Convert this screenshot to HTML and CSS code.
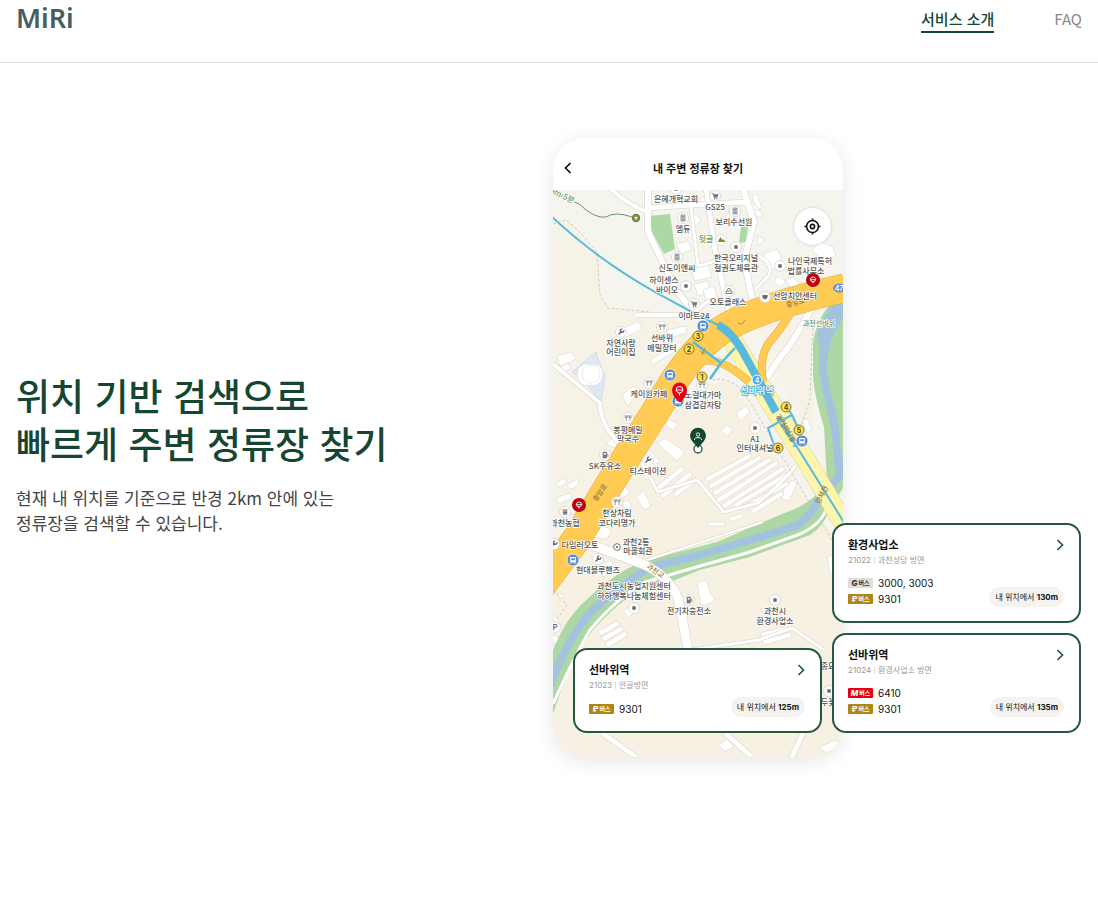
FILE: index.html
```html
<!DOCTYPE html>
<html lang="ko">

<head>
    <meta charset="UTF-8">
    <meta name="viewport" content="width=device-width, initial-scale=1.0">
    <title>MiRi</title>
    <link rel="stylesheet" href="styles.css">
</head>

<body>
    <header class="header">
        <a class="logo" href="#">MiRi</a>
        <nav class="nav">
            <a class="nav-link active" href="#intro">서비스 소개</a>
            <a class="nav-link" href="#faq">FAQ</a>
        </nav>
    </header>

    <main class="feature" id="intro">
        <div class="feature-text">
            <h1>위치 기반 검색으로<br>빠르게 주변 정류장 찾기</h1>
            <p>현재 내 위치를 기준으로 반경 2km 안에 있는<br>정류장을 검색할 수 있습니다.</p>
        </div>

        <div class="showcase">
            <div class="phone">
                <div class="phone-header">
                    <button class="back" aria-label="뒤로">
                        <svg width="8" height="12" viewBox="0 0 8 12"><path d="M6.5 1 L1.5 6 L6.5 11" /></svg>
                    </button>
                    <h2>내 주변 정류장 찾기</h2>
                </div>
                <div class="map">
                    <svg class="map-svg" viewBox="553 190 290 567">
                        <defs>
                            <g id="poi"><circle r="5.5" fill="#fff" stroke="#d3d0c8" stroke-width="0.7" /></g>
                            <g id="square"><use href="#poi" /><rect x="-1.7" y="-1.7" width="3.4" height="3.4" fill="#666" /></g>
                            <g id="food"><use href="#poi" /><path d="M-2.8 -2.8 V-0.5 H-0.6 V-2.8 M-1.7 -2.8 V3 M0.9 -2.8 V-0.5 H3.1 V-2.8 M2 -2.8 V3" fill="none" stroke="#777" stroke-width="0.7" /></g>
                            <g id="building"><use href="#poi" /><path d="M-2 -3 h4 v6 h-4 z M-1 -1.5 h2 M-1 0 h2 M-1 1.5 h2" fill="#ddd" stroke="#777" stroke-width="0.8" /></g>
                            <g id="cart"><use href="#poi" /><path d="M-3.3 -2.5 h1.4 l1 3.8 h3 l1 -2.9 h-4.4" fill="#777" stroke="#777" stroke-width="0.8" /><circle cx="-0.5" cy="2.8" r="0.7" fill="#777" /><circle cx="1.8" cy="2.8" r="0.7" fill="#777" /></g>
                            <g id="fuel"><use href="#poi" /><path d="M-2 3 v-6 h3.5 v6 z M2 -1.5 l1 1 v2.5" fill="#777" stroke="#777" stroke-width="0.7" /><path d="M-1.2 -2 h2 v1.6 h-2 z" fill="#fff" /></g>
                            <g id="car"><use href="#poi" /><path d="M-2 -0.5 l1 -2 h2 l1 2 M-3 0 h6 v2.5 h-6 z" fill="none" stroke="#777" stroke-width="0.9" /></g>
                            <g id="wrench"><use href="#poi" /><path d="M-2.5 2.5 L1 -1" stroke="#666" stroke-width="1.4" /><path d="M2.8 -1.8 a1.8 1.8 0 1 1 -1.6 -1.3" fill="none" stroke="#666" stroke-width="1.2" /></g>
                            <g id="bus"><circle r="6" fill="#5b8fd6" stroke="#fff" stroke-width="0.7" /><path d="M-2.8 -3 h5.6 v5.4 h-5.6 z" fill="#fff" /><path d="M-1.8 -1.8 h3.6 v2 h-3.6 z" fill="#5b8fd6" /><path d="M-2 2.5 v1 M2 2.5 v1" stroke="#fff" /></g>
                            <g id="stop"><circle r="7" fill="#b90010" /><path d="M-2.7 -0.3 a2.7 2.7 0 0 1 5.4 0 z M-2.7 -0.3 q0.5 2.2 2.7 2.2 t2.7 -2.2 M0 1.5 V3.5" fill="none" stroke="#fff" stroke-width="0.9" /></g>
                            <g id="exit"><circle r="5" fill="#fbe04a" stroke="#5d5935" stroke-width="0.8" /></g>
                        </defs>

                        <rect x="553" y="190" width="290" height="567" fill="#f5f4ed" />
                        <path d="M553 230 L562 221 L575 229 L598 258 L600 296 L608 308 L650 314 L690 324 L697 345 L640 430 L600 492 L553 560 Z" fill="#f7f2e6" />
                        <path d="M700 385 L728 382 L745 392 L800 487 L843 550 V757 H553 V590 L620 490 L670 410 Z" fill="#f7f1e4" />
                        <path d="M735 385 L790 480 L843 535 V430 L795 455 Z" fill="#f4f3ee" />
                        <path d="M755 320 L810 300 L814 425 L800 420 Z" fill="#f7f2e8" />

                        <!-- parks and pond -->
                        <path d="M649 216 L670 214 L675 249 L664 254 L652 232 Z" fill="#acd8a4" />
                        <path d="M741 227 L748 226 L746 242 L739 243 Z" fill="#acd8a4" />
                        <path d="M596 352 L605 377 L601 402 L587 385 L572 372 Z" fill="#dce8f4" stroke="#cbd8e4" stroke-width="0.7" />
                        <path d="M577 375 q0 -12 13 -11 q14 -1 13 11 q-3 13 -13 10 q-11 3 -13 -10" fill="#fff" stroke="#cfd8e0" stroke-width="0.6" />
                        <circle cx="591" cy="374" r="9" fill="#fff" stroke="#d9e2ea" stroke-width="0.7" />

                        <!-- blocks of buildings -->
                        <g fill="#fff" stroke="#dedbd2" stroke-width="0.7">
                            <path d="M688 219 l9 -5 4 8 -9 5z M683 300 l8 -2 3 5 -9 3z M676 244 l12 -3 4 9 -11 4z M700 197 l8 0 v8 h-8z" />
                            <path d="M691 268 l17 -4 4 13 -18 4z M694 284 l14 -3 3 11 -13 4z M728 203 l10 -1 2 14 -10 2z M725 215 l8 -2 4 9 -9 3z" />
                            <path d="M752 196 l5 -2 5 14 -6 3z M757 236 l8 3 -7 7z M763 254 l14 -5 5 9 -9 12 -8 -4z M750 206 l5 -3 8 13 -5 2z" />
                            <path d="M777 276 l9 5 -5 6 -7 -5z M785 279 l9 -2 6 8 -9 3z M812 250 l8 -8 12 4 4 10 -12 6z M703 290 l11 -4 4 14 -11 3z" />
                            <path d="M557 356 l14 -4 5 7 -16 8z M560 366 l8 -3 3 6 -7 3z M622 329 l17 -8 3 8 -18 9z M612 338 l9 -3 3 7 -10 4z" />
                            <path d="M650 360 l30 -18 3 5 -31 18z M667 330 l18 -4 2 7 -18 5z M622 395 l11 -9 5 5 -10 16z M736 413 l10 -7 4 6 -10 9z" />
                            <path d="M668 419 l10 5 -5 6 -7 -4z M657 443 l8 -5 20 14 -8 9z M726 425 l7 4 -5 7 -7 -5z M648 449 l12 12 -7 5 -9 -11z" />
                            <path d="M606 444 l8 -7 5 4 -4 7z M603 455 l13 -4 4 9 -10 10 -9 -5z M640 462 l10 -7 7 18 -11 7z M617 491 l8 -5 5 7 -9 6z" />
                            <path d="M556 498 l14 -5 2 5 -14 6z M567 485 l10 -6 2 5 -8 6z M556 483 l8 -5 3 5 -9 4z M568 508 l9 -5 3 7 -8 4z" />
                            <path d="M592 532 l8 -7 12 5 -5 9 -14 -2z M622 503 l6 -3 4 8 -6 3z M636 496 l8 -5 7 15 -7 4z M697 583 l9 -3 5 15 4 3 -1 4 -13 4z" />
                            <path d="M599 565 l12 -5 5 11 -13 6z M623 611 l14 -9 4 6 -13 9z M708 522 h17 v4 h-17z M728 518 l14 -5 2 4 -14 5z M558 592 l6 4 -4 6z" />
                            <path d="M784 488 l8 -8 5 3 -8 18 -7 -2z M807 418 l5 12 -5 3 -5 -12z M827 557 l8 -3 v18 l-5 2z M718 745 l10 -6 6 8 -9 4z" />
                            <path d="M553 615 l6 5 -5 6z M551 634 l11 5 -6 10z M819 747 l17 -7 5 6 -15 7z" />
                        </g>

                        <!-- greenhouses -->
                        <g fill="#fff" stroke="#dcd9d0" stroke-width="0.7">
                            <path d="M660 495 l30 -24 3 4 -30 24z M653 489 l29 -23 3 4 -29 23z M673 493 l22 -16 3 4 -22 16z" />
                            <path d="M705 478 l45 -25 2 4 -45 25z M708 485 l52 -30 2 4 -51 30z M712 492 l58 -35 2 4 -57 35z M716 499 l61 -39 2 4 -60 39z" />
                            <path d="M721 505 l62 -39 2 4 -61 39z M733 504 l54 -32 2 4 -53 32z M741 507 l46 -26 2 4 -45 26z M750 510 l32 -19 2 4 -31 19z" />
                            <path d="M598 631 l19 -10 3 4 -19 11z M601 637 l20 -11 3 4 -20 12z M605 643 l20 -12 3 4 -20 13z" />
                            <path d="M760 633 l27 -7 2 5 -27 8z M762 640 l28 -8 2 5 -28 8z" />
                        </g>

                        <!-- side roads -->
                        <g fill="none" stroke-linejoin="round">
                            <g stroke="#d3d0c8">
                                <path d="M610 188 Q625 203 647 212" stroke-width="5" />
                                <path d="M648 188 V232 L676 290 L696 315" stroke-width="7" />
                                <path d="M706 188 L715 250 L730 318 L735 328" stroke-width="6" />
                                <path d="M743 188 L754 222 L744 260 L752 298" stroke-width="7" />
                                <path d="M647 208 L706 204 L749 202" stroke-width="6" />
                                <path d="M691 207 L698 266 L731 257 M755 254 Q774 262 769 275 L755 290" stroke-width="4" />
                                <path d="M636 315 L690 315 L710 300" stroke-width="5" />
                                <path d="M553 364 L600 403 Q600 425 621 445" stroke-width="5" />
                                <path d="M646 470 L658 492 L697 480 L724 512 L758 503 Q785 480 796 465" stroke-width="4" />
                                <path d="M725 733 L752 757 M792 757 L803 733 M602 733 L636 757" stroke-width="6" />
                            </g>
                            <g stroke="#fff">
                                <path d="M610 188 Q625 203 647 212" stroke-width="4" />
                                <path d="M648 188 V232 L676 290 L696 315" stroke-width="6" />
                                <path d="M706 188 L715 250 L730 318 L735 328" stroke-width="5" />
                                <path d="M743 188 L754 222 L744 260 L752 298" stroke-width="6" />
                                <path d="M647 208 L706 204 L749 202" stroke-width="5" />
                                <path d="M691 207 L698 266 L731 257 M755 254 Q774 262 769 275 L755 290" stroke-width="3" />
                                <path d="M636 315 L690 315 L710 300" stroke-width="4" />
                                <path d="M553 364 L600 403 Q600 425 621 445" stroke-width="4" />
                                <path d="M646 470 L658 492 L697 480 L724 512 L758 503 Q785 480 796 465" stroke-width="3" />
                                <path d="M725 733 L752 757 M792 757 L803 733 M602 733 L636 757" stroke-width="5" />
                            </g>
                        </g>

                        <!-- stream -->
                        <path d="M843 296 L833 301 Q815 320 813 345 V375 Q814 395 824 427 L827 482 Q814 500 797 508 L763 522 L717 542 L647 560 Q617 570 583 603 Q565 620 553 650 V714 Q570 660 593 630 Q617 603 643 587 L670 582 L700 570 L750 557 L810 535 Q825 525 829 510 L843 488 Z" fill="#add8a5" />
                        <path d="M843 301 L833 304 Q819 324 817 335 Q821 350 819 370 Q822 390 828 414 Q832 430 833 447 L836 482 L843 470 V462 L840 445 Q840 425 834 405 Q828 385 827 367 Q828 345 835 332 L843 318 Z" fill="#a3c2de" />
                        <path d="M550 685 Q571 632 592 611 Q617 588 648 568 L700 555 L750 540 L798 525 Q813 513 817 502 L843 472" fill="none" stroke="#a3c2de" stroke-width="8" />
                        <path d="M553 704 Q575 655 590 630 Q617 598 645 582 L700 566 L750 552 L800 534 Q820 525 826 510" fill="none" stroke="#fff" stroke-width="3" />
                        <path d="M644 561 L763 522" stroke="#d3d0c8" stroke-width="3" />
                        <path d="M644 561 L763 522" stroke="#fff" stroke-width="2" />
                        <path d="M592 545 L645 565 Q668 576 678 598 Q682 615 688 650" fill="none" stroke="#d3d0c8" stroke-width="10" />
                        <path d="M592 545 L645 565 Q668 576 678 598 Q682 615 688 650" fill="none" stroke="#fff" stroke-width="9" />
                        <path d="M690 650 L759 640 L792 628 L824 650" fill="none" stroke="#d3d0c8" stroke-width="4" />
                        <path d="M690 650 L759 640 L792 628 L824 650" fill="none" stroke="#fff" stroke-width="3" />

                        <!-- dashed borders -->
                        <g fill="none" stroke="#c4c0b6" stroke-width="0.8" stroke-dasharray="3 2">
                            <path d="M553 224 L566 220 L580 232 L597 252 L600 295 L608 308 L650 312" />
                            <path d="M712 380 Q728 376 744 392 L790 470 L832 540" />
                            <path d="M814 318 L812 345 L810 400 L800 430" />
                            <path d="M680 350 L650 405 L625 445" />
                            <path d="M553 590 L567 605 L555 622" />
                        </g>

                        <!-- main roads -->
                        <path d="M816 302 L790 345 Q773 366 766 380" fill="none" stroke="#d3d0c8" stroke-width="7" />
                        <path d="M816 302 L790 345 Q773 366 766 380" fill="none" stroke="#fff" stroke-width="6" />
                        <path d="M726 330 L818 480 L850 534" fill="none" stroke="#ddd39b" stroke-width="20" />
                        <path d="M726 330 L818 480 L850 534" fill="none" stroke="#fdf5ac" stroke-width="19" />
                        <path d="M794 306 Q784 326 768 344 Q759 359 763 382" fill="none" stroke="#dfae46" stroke-width="8" />
                        <path d="M694 364 Q716 352 749 382" fill="none" stroke="#dfae46" stroke-width="8" />
                        <path d="M540 588 L578 537 L614 477 L664 398 Q690 352 720 331 Q755 308 845 288" fill="none" stroke="#dfae46" stroke-width="29" />
                        <path d="M540 588 L578 537 L614 477 L664 398 Q690 352 720 331 Q755 308 845 288" fill="none" stroke="#ffcb53" stroke-width="28" />
                        <path d="M794 306 Q784 326 768 344 Q759 359 763 382 M694 364 Q716 352 749 382" fill="none" stroke="#ffcb53" stroke-width="7" />

                        <!-- subway lines and exits -->
                        <g fill="none" stroke="#58b9df">
                            <path d="M551 216 Q598 260 655 292 L690 311 L720 326" stroke-width="2" />
                            <path d="M718 325 Q731 331 743 352 L776 412" stroke-width="8" />
                            <path d="M784 427 L797 447 L850 532" stroke-width="2" />
                            <path d="M693 342 L721 363 L735 348 M721 363 L710 379" stroke-width="2.5" />
                            <path d="M786 406 L792 415 L768 428 L774 445 M792 415 L800 432" stroke-width="2" />
                            <path d="M778 417 L796 446" stroke-width="5" stroke-dasharray="4 4" />
                        </g>
                        <path d="M553 193 Q568 199 579 204 Q595 219 606 217 Q615 211 632 217" fill="none" stroke="#6b9468" stroke-width="1" />
                        <circle cx="636" cy="218" r="3.7" fill="#8f954b" stroke="#6d7135" />
                        <path d="M634.5 217 h3 l-1.5 3z" fill="#fff" />

                        <!-- places -->
                        <use href="#square" x="676" y="189" />
                        <use href="#cart" x="715" y="196" />
                        <use href="#building" x="735" y="211" />
                        <use href="#building" x="683" y="218" />
                        <use href="#poi" x="721" y="240" />
                        <path d="M717.5 242 l3 -5 2 3 1 -1 2 3z" fill="#71973a" />
                        <use href="#square" x="736" y="247" />
                        <use href="#building" x="677" y="257" />
                        <use href="#square" x="686" y="286" />
                        <use href="#square" x="780" y="266" />
                        <use href="#car" x="729" y="291" />
                        <use href="#cart" x="694" y="304" />
                        <use href="#poi" x="765" y="297" />
                        <path d="M762 295 q3 1 3 -1 q0 2 3 1 q-0.5 4 -3 4.5 q-2.5 -0.500 -3 -4.500" fill="#666" />
                        <use href="#food" x="662" y="327" />
                        <use href="#wrench" x="621" y="332" />
                        <use href="#food" x="649" y="383" />
                        <use href="#food" x="702" y="385" />
                        <use href="#food" x="628" y="418" />
                        <use href="#square" x="755" y="428" />
                        <use href="#fuel" x="605" y="455" />
                        <use href="#wrench" x="648" y="460" />
                        <use href="#food" x="617" y="502" />
                        <use href="#poi" x="565" y="512" />
                        <text class="place" x="565" y="515">₩</text>
                        <use href="#wrench" x="554" y="544" />
                        <circle cx="617" cy="547" r="3.3" fill="#fff" stroke="#777" />
                        <circle cx="617" cy="547" r="1" fill="#555" />
                        <use href="#wrench" x="598" y="559" />
                        <use href="#square" x="634" y="608" />
                        <use href="#fuel" x="689" y="600" />
                        <use href="#square" x="775" y="600" />
                        <use href="#poi" x="555" y="627" />
                        <text class="place" x="555" y="630">P</text>
                        <use href="#square" x="829" y="691" />

                        <g class="place">
                            <text x="676" y="202">은혜개혁교회</text>
                            <text x="715" y="210">GS25</text>
                            <text x="734" y="225">보리수선원</text>
                            <text x="683" y="232">엠듀</text>
                            <text x="706" y="242" class="green">뒷골</text>
                            <text x="736" y="261">한국오리지널</text>
                            <text x="736" y="271">절권도체육관</text>
                            <text x="677" y="271">신도이앤씨</text>
                            <text x="664" y="283">하이센스</text>
                            <text x="667" y="293">바이오</text>
                            <text x="810" y="264">나인국제특허</text>
                            <text x="806" y="274">법률사무소</text>
                            <text class="road" transform="translate(796 305) rotate(-15)">중앙로</text>
                            <text x="795" y="299">선암치안센터</text>
                            <text x="728" y="305">오토클래스</text>
                            <text x="694" y="319">이마트24</text>
                            <text x="662" y="341">선바위</text>
                            <text x="662" y="351">메밀장터</text>
                            <text x="621" y="346">자연사랑</text>
                            <text x="621" y="355">어린이집</text>
                            <text x="649" y="397">케이원카페</text>
                            <text x="703" y="398">노걸대가마</text>
                            <text x="703" y="408">삼겹감자탕</text>
                            <text x="628" y="433">봉평메밀</text>
                            <text x="628" y="442">막국수</text>
                            <text x="755" y="442">A1</text>
                            <text x="755" y="451">인터내셔널</text>
                            <text x="605" y="469">SK주유소</text>
                            <text x="648" y="474">티스테이션</text>
                            <text x="617" y="516">한상차림</text>
                            <text x="617" y="526">코다리명가</text>
                            <text x="565" y="526">과천농협</text>
                            <text x="580" y="548">다임러오토</text>
                            <text x="636" y="545">과천2통</text>
                            <text x="638" y="554">마을회관</text>
                            <text x="598" y="573">현대블루핸즈</text>
                            <text x="634" y="589">과천도시농업지원센터</text>
                            <text x="634" y="599">하하행복나눔체험센터</text>
                            <text x="689" y="614">전기차충전소</text>
                            <text x="775" y="614">과천시</text>
                            <text x="775" y="624">환경사업소</text>
                            <text x="828" y="669">종묘</text>
                            <text x="828" y="705">두꽃</text>
                            <text x="819" y="326" class="stream">과천선바위</text>
                            <text class="road" transform="translate(602 494) rotate(-55)">중앙로</text>
                            <text class="road" transform="translate(824 496) rotate(-62)">양재천</text>
                            <text class="road" transform="translate(654 573) rotate(35)">과천교</text>
                            <text class="road" transform="translate(784 430) rotate(58)">과천봉담로</text>
                            <text class="green" transform="translate(561 198) rotate(25)">9m·5분</text>
                            <text x="757" y="394" class="station">선바위역</text>
                        </g>
                        <path d="M738 323 q4 3 7 -3 M700 351 l5 3 M702 355 l3 -7" fill="none" stroke="#a47d34" stroke-width="0.8" />

                        <circle cx="757" cy="380" r="5" fill="#46aedb" stroke="#fff" />
                        <text class="exit white" x="757" y="383">4</text>
                        <use href="#bus" x="703" y="326" />
                        <use href="#bus" x="670" y="375" />
                        <use href="#bus" x="678" y="401" />
                        <use href="#bus" x="802" y="441" />
                        <use href="#bus" x="573" y="560" />
                        <use href="#exit" x="698" y="336" /><text class="exit" x="698" y="339">3</text>
                        <use href="#exit" x="689" y="349" /><text class="exit" x="689" y="352">2</text>
                        <use href="#exit" x="702" y="377" /><text class="exit" x="702" y="380">1</text>
                        <use href="#exit" x="786" y="407" /><text class="exit" x="786" y="410">4</text>
                        <use href="#exit" x="799" y="430" /><text class="exit" x="799" y="433">5</text>
                        <use href="#exit" x="778" y="448" /><text class="exit" x="778" y="451">6</text>
                        <ellipse cx="840" cy="288" rx="7" ry="4.5" fill="#5b8fd6" />
                        <text class="exit white" x="839" y="291">47</text>

                        <use href="#stop" x="813" y="280" />
                        <use href="#stop" x="579" y="505" />
                        <path d="M679 402 Q672 396 672 390 A7.5 7.5 0 1 1 687 390 Q687 396 681 402 Z" fill="#e60012" />
                        <path d="M676 390 a3.5 3.5 0 0 1 7 0 z q1 3 3.5 3 t3.5 -3 M679.5 393 v2.5" fill="none" stroke="#fff" />
                        <circle cx="698" cy="449" r="4" fill="#fff" stroke="#2e5e4b" stroke-width="1.4" />
                        <path d="M698 448 L692 441 A8 8 0 1 1 704 441 Z" fill="#164632" />
                        <circle cx="698" cy="434.5" r="1.7" fill="none" stroke="#fff" stroke-width="0.9" />
                        <path d="M694.5 440 v-1 q1 -1.5 3.5 -1.5 t3.5 1.5 v1" fill="none" stroke="#fff" stroke-width="0.9" />
                    </svg>
                    <button class="locate" aria-label="내 위치">
                        <svg width="17" height="17" viewBox="0 0 18 18">
                            <circle cx="9" cy="9" r="6.3" />
                            <circle cx="9" cy="9" r="2.2" />
                            <path d="M9 0.5 V3 M9 15 V17.5 M0.5 9 H3 M15 9 H17.5" />
                        </svg>
                    </button>
                </div>
            </div>

            <div class="cards">
                <a class="card" href="#21023">
                    <span class="card-top">
                        <strong>선바위역</strong>
                        <svg width="8" height="12" viewBox="0 0 8 12"><path d="M1.5 1 L6.5 6 L1.5 11" /></svg>
                    </span>
                    <span class="direction">21023 <i></i> 안골방면</span>
                    <span class="card-bottom">
                        <span class="buses">
                            <span class="bus"><span class="badge gold"><b>₽</b>버스</span>9301</span>
                        </span>
                        <span class="distance">내 위치에서 <b>125m</b></span>
                    </span>
                </a>
                <div class="card-column">
                    <a class="card" href="#21022">
                        <span class="card-top">
                            <strong>환경사업소</strong>
                            <svg width="8" height="12" viewBox="0 0 8 12"><path d="M1.5 1 L6.5 6 L1.5 11" /></svg>
                        </span>
                        <span class="direction">21022 <i></i> 과천성당 방면</span>
                        <span class="card-bottom">
                            <span class="buses">
                                <span class="bus"><span class="badge gray"><b>G</b>버스</span>3000, 3003</span>
                                <span class="bus"><span class="badge gold"><b>₽</b>버스</span>9301</span>
                            </span>
                            <span class="distance">내 위치에서 <b>130m</b></span>
                        </span>
                    </a>
                    <a class="card" href="#21024">
                        <span class="card-top">
                            <strong>선바위역</strong>
                            <svg width="8" height="12" viewBox="0 0 8 12"><path d="M1.5 1 L6.5 6 L1.5 11" /></svg>
                        </span>
                        <span class="direction">21024 <i></i> 환경사업소 방면</span>
                        <span class="card-bottom">
                            <span class="buses">
                                <span class="bus"><span class="badge red"><b>M</b>버스</span>6410</span>
                                <span class="bus"><span class="badge gold"><b>₽</b>버스</span>9301</span>
                            </span>
                            <span class="distance">내 위치에서 <b>135m</b></span>
                        </span>
                    </a>
                </div>
            </div>
        </div>
    </main>
</body>

</html>
```
FILE: styles.css
```css
* {
    box-sizing: border-box;
}

body {
    margin: 0;
    font-family: "Noto Sans CJK KR", sans-serif;
    background-color: #fff;
    color: #111;
}

a {
    color: inherit;
    text-decoration: none;
}

button {
    padding: 0;
    border: none;
    background: none;
    cursor: pointer;
}

/* Header */
.header {
    display: flex;
    justify-content: space-between;
    align-items: flex-end;
    padding: 3px 16px 29px;
    border-bottom: 1px solid #e0e0e0;
}

.logo {
    font-family: "Noto Sans", sans-serif;
    font-size: 27px;
    font-weight: 600;
    line-height: 30px;
    color: #45605a;
}

.nav {
    display: flex;
    gap: 60px;
}

.nav-link {
    font-size: 15px;
    line-height: 24px;
    color: #888;
    border-bottom: 2px solid transparent;
}

.nav-link.active {
    color: #164632;
    font-weight: 500;
    border-bottom-color: #164632;
}

/* Feature */
.feature {
    display: flex;
    justify-content: space-between;
    align-items: center;
    padding: 75px 16px;
}

.feature-text {
    padding-bottom: 6px;
}

.feature-text h1 {
    margin: 0 0 18px;
    font-size: 37px;
    font-weight: 500;
    line-height: 48px;
    color: #164632;
}

.feature-text p {
    margin: 0;
    font-size: 17px;
    line-height: 25px;
    color: #444;
}

.showcase {
    position: relative;
    flex: 0 0 529px;
    margin-bottom: 16px;
}

.phone {
    width: 290px;
    border-radius: 32px;
    overflow: hidden;
    background-color: #fff;
    box-shadow: 0 4px 20px rgba(0, 0, 0, 0.1);
}

.phone-header {
    display: grid;
    grid-template-columns: 30px 1fr 30px;
    align-items: center;
    height: 52px;
    padding-top: 8px;
}

.phone-header h2 {
    margin: 0;
    font-size: 11px;
    font-weight: 700;
    text-align: center;
}

.back svg,
.card-top svg,
.locate svg {
    display: block;
    margin: 0 auto;
    fill: none;
    stroke: #111;
    stroke-width: 1.7;
}

/* Map */
.map {
    position: relative;
}

.map-svg {
    display: block;
    width: 100%;
}

.place {
    font-size: 8px;
    font-weight: 500;
    text-anchor: middle;
    fill: #555;
    stroke: #fff;
    stroke-width: 1.5px;
    stroke-linejoin: round;
    paint-order: stroke;
}

.place .green {
    fill: #6f9a58;
}

.place .stream {
    font-size: 7px;
    fill: #5e9173;
}

.place .road {
    font-size: 7px;
    fill: #94773c;
    stroke: none;
}

.place .station {
    font-size: 9px;
    fill: #fff;
    stroke: #46aedb;
}

.exit {
    font-family: Inter, sans-serif;
    font-size: 7px;
    font-weight: 600;
    text-anchor: middle;
    fill: #333;
}

.exit.white {
    fill: #fff;
}

.locate {
    position: absolute;
    top: 18px;
    right: 12px;
    width: 37px;
    height: 37px;
    border-radius: 50%;
    background-color: #fff;
    box-shadow: 0 0 3px rgba(0, 0, 0, 0.2);
}

/* Bus stop cards */
.cards {
    position: absolute;
    left: 20px;
    bottom: 24px;
    display: grid;
    grid-template-columns: 249px 249px;
    align-items: end;
    gap: 10px;
}

.card-column {
    display: grid;
    gap: 10px;
}

.card {
    display: block;
    padding: 12px 15px 8px 14px;
    border: 2px solid #26583f;
    border-radius: 14px;
    background-color: #fff;
    font-family: Inter, "Noto Sans CJK KR", sans-serif;
}

.card-top {
    display: flex;
    justify-content: space-between;
    align-items: center;
}

.card-top strong {
    font-size: 11px;
    line-height: 16px;
}

.card-top svg {
    margin: 0;
    stroke: #26583f;
}

.direction {
    display: flex;
    align-items: center;
    gap: 3px;
    font-size: 8px;
    line-height: 14px;
    color: #999;
}

.direction i {
    width: 1px;
    height: 7px;
    background-color: #ddd;
}

.card-bottom {
    display: flex;
    justify-content: space-between;
    align-items: flex-end;
    padding-top: 5px;
}

.buses {
    padding: 3px 0 6px;
}

.bus {
    display: flex;
    align-items: center;
    gap: 5px;
    font-size: 10px;
    line-height: 16px;
}

.badge {
    display: flex;
    justify-content: center;
    align-items: center;
    gap: 1px;
    width: 25px;
    height: 10px;
    border-radius: 1px;
    color: #fff;
    font-size: 6px;
    font-weight: 700;
    line-height: 10px;
}

.badge b {
    font-size: 8px;
    font-weight: 800;
}

.gold {
    background-color: #b08518;
}

.gray {
    background-color: #dcdcd8;
    color: #333;
}

.red {
    background-color: #e60012;
}

.red b {
    font-style: italic;
}

.distance {
    margin-bottom: 6px;
    padding: 0 6px;
    border-radius: 10px;
    background-color: #f4f3f0;
    font-size: 8px;
    line-height: 20px;
}
```
